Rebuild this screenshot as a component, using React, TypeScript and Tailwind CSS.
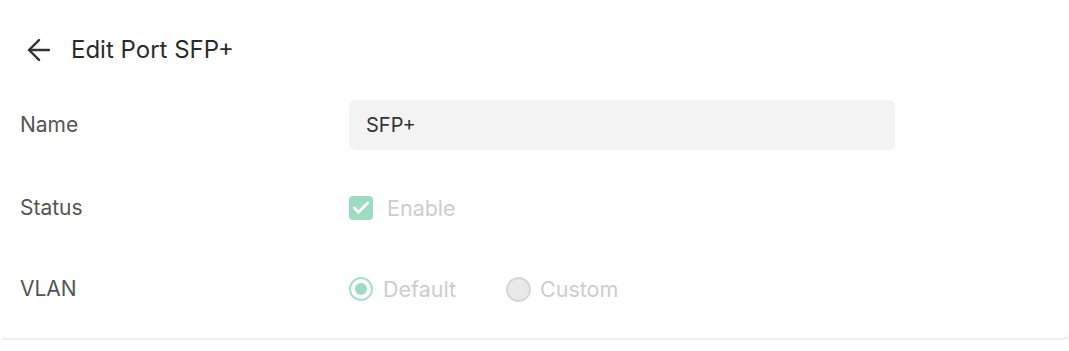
import { ArrowLeft, Check } from "lucide-react";

export default function App() {
  return (
    <div className="w-[1069px] h-[351px] bg-white font-['Inter',sans-serif]">
      <div className="rounded-b-md bg-white border-b-2 border-[#ececec] h-[340px]">
        <div className="flex items-center pl-[22px] pt-[34px] h-[66px]">
          <ArrowLeft className="w-[34px] h-[34px] text-[#333]" strokeWidth={1.7} />
          <span className="ml-[15px] text-[24px] text-[#2b2b2b]">Edit Port SFP+</span>
        </div>

        <div className="flex items-center mt-[34px] h-[50px]">
          <div className="w-[349px] pl-[20px] text-[21px] text-[#555]">Name</div>
          <div className="w-[546px] h-[50px] rounded-md bg-[#f3f3f3] flex items-center pl-[17px] text-[20px] text-[#333]">
            SFP+
          </div>
        </div>

        <div className="flex items-center mt-[33px] h-[50px]">
          <div className="w-[349px] pl-[20px] text-[21px] text-[#555]">Status</div>
          <div className="flex items-center">
            <div className="w-[24px] h-[24px] rounded-[4px] bg-[#9ddbc3] flex items-center justify-center">
              <Check className="w-[20px] h-[20px] text-white" strokeWidth={3.5} />
            </div>
            <span className="ml-[14px] text-[21.5px] text-[#cdcdcd]">Enable</span>
          </div>
        </div>

        <div className="flex items-center mt-[31px] h-[50px]">
          <div className="w-[349px] pl-[20px] text-[21px] text-[#555]">VLAN</div>
          <div className="flex items-center">
            <div className="w-[24px] h-[24px] rounded-full border-2 border-[#a6e0c9] flex items-center justify-center">
              <div className="w-[12px] h-[12px] rounded-full bg-[#9ddbc3]" />
            </div>
            <span className="ml-[10px] text-[21.5px] text-[#cdcdcd]">Default</span>
            <div className="ml-[50px] w-[25px] h-[25px] rounded-full border-2 border-[#d6d6d6] bg-[#e9e9e9]" />
            <span className="ml-[9px] text-[21.5px] text-[#cdcdcd]">Custom</span>
          </div>
        </div>
      </div>
    </div>
  );
}
